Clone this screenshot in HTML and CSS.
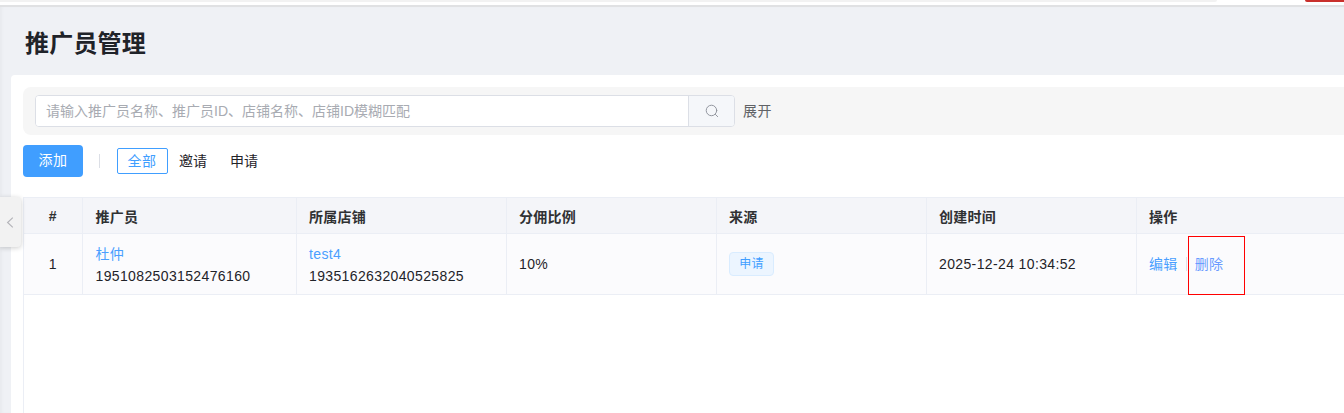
FILE: index.html
```html
<!DOCTYPE html>
<html lang="zh-CN">
<head>
<meta charset="utf-8">
<title>推广员管理</title>
<link rel="stylesheet" href="styles.css">
</head>
<body>
<div class="topbar"><div class="topbar-tab"></div><div class="topbar-alert"></div></div>
<main class="page">
  <h1 class="page-title">推广员管理</h1>
  <section class="card">
    <div class="search-panel">
      <div class="search-box">
        <input class="search-input" type="text" placeholder="请输入推广员名称、推广员ID、店铺名称、店铺ID模糊匹配">
        <button class="search-btn" type="button" aria-label="搜索">
          <svg viewBox="0 0 16 16" width="14" height="14" fill="none" stroke="#8f939b" stroke-width="1.1" stroke-linecap="round"><circle cx="7.4" cy="7.4" r="6"/><path d="M11.9 11.9l2.6 2.6"/></svg>
        </button>
      </div>
      <a class="expand">展开</a>
    </div>
    <div class="toolbar">
      <button class="add-btn" type="button"><span class="add-label">添加</span></button>
      <span class="divider"></span>
      <div class="tabs">
        <span class="tab tab-active">全部</span>
        <span class="tab tab-invite">邀请</span>
        <span class="tab tab-apply">申请</span>
      </div>
    </div>
    <div class="table-area">
      <table class="data-table">
        <thead>
          <tr>
            <th class="col-index">#</th>
            <th class="col-promoter">推广员</th>
            <th class="col-wide">所属店铺</th>
            <th class="col-wide">分佣比例</th>
            <th class="col-wide">来源</th>
            <th class="col-wide">创建时间</th>
            <th class="col-actions">操作</th>
          </tr>
        </thead>
        <tbody>
          <tr>
            <td class="cell-index">1</td>
            <td class="cell-stack cell-promoter"><a class="link">杜仲</a><div>1951082503152476160</div></td>
            <td class="cell-stack"><a class="link">test4</a><div>1935162632040525825</div></td>
            <td>10%</td>
            <td class="cell-tag"><span class="tag">申请</span></td>
            <td>2025-12-24 10:34:52</td>
            <td><a class="link">编辑</a><span class="action-sep"></span><a class="link link-danger">删除</a></td>
          </tr>
        </tbody>
      </table>
    </div>
  </section>
</main>
<button class="collapse" type="button" aria-label="收起">
  <svg viewBox="0 0 10 14" width="8" height="13" fill="none" stroke="#b3b3b8" stroke-width="1.4"><path d="M8.5 1L2 7l6.500 6"/></svg>
</button>
<div class="annotation"></div>
</body>
</html>
```
FILE: styles.css
```css
* { box-sizing: border-box; }
html, body { margin: 0; height: 100%; overflow: hidden; background: #fff; }
body {
  width: 1344px;
  height: 413px;
  position: relative;
  font-family: "Liberation Sans", "Noto Sans CJK SC", sans-serif;
  font-size: 14px;
  color: #1f2329;
  display: flex;
  flex-direction: column;
}
.topbar {
  height: 7px;
  flex: none;
  background: #fff;
  border-bottom: 2px solid #e0e1e3;
  display: flex;
  justify-content: space-between;
}
.topbar-tab { width: 1217px; height: 2px; background: #f2f2f2; border-bottom-right-radius: 6px; }
.topbar-alert { width: 39px; height: 2px; background: #c9302c; border-bottom-left-radius: 3px; }
.page {
  flex: 1;
  min-height: 0;
  background: #eff1f5;
  padding-left: 11px;
  box-shadow: inset 3px 0 3px -1px rgba(0,0,0,.03);
  display: flex;
  flex-direction: column;
}
.page-title {
  margin: 0;
  height: 68px;
  flex: none;
  padding-left: 14px;
  font-size: 24px;
  font-weight: 700;
  line-height: 73px;
  letter-spacing: .2px;
  color: #1f2329;
}
.card {
  flex: 1;
  background: #fff;
  border-top-left-radius: 4px;
  padding: 12px 0 0 12px;
  display: flex;
  flex-direction: column;
  min-height: 0;
}
.search-panel {
  height: 48px;
  flex: none;
  background: #f6f6f6;
  border-radius: 8px 0 0 8px;
  padding: 8px 0 0 12px;
  display: flex;
  align-items: flex-start;
}
.search-box {
  width: 700px;
  height: 32px;
  display: flex;
  border: 1px solid #dcdfe6;
  border-radius: 4px;
  overflow: hidden;
  background: #fff;
}
.search-input {
  flex: 1;
  min-width: 0;
  border: 0;
  outline: 0;
  padding: 0 10px;
  font: inherit;
  background: #fff;
}
.search-input::placeholder { color: #a8abb2; opacity: 1; }
.search-btn {
  width: 46px;
  border: 0;
  border-left: 1px solid #dcdfe6;
  background: #f5f7fa;
  padding: 0;
  display: flex;
  align-items: center;
  justify-content: center;
}
.expand { margin-left: 8px; line-height: 32px; letter-spacing: .6px; color: #606266; }
.toolbar {
  height: 32px;
  flex: none;
  margin-top: 10px;
  display: flex;
  align-items: center;
}
.add-btn {
  width: 60px;
  height: 32px;
  border: 0;
  border-radius: 4px;
  background: #409eff;
  color: #fff;
  font: inherit;
  padding: 0;
  display: flex;
  align-items: center;
  justify-content: center;
}
.add-label { line-height: 30px; height: 30px; margin-top: -2px; letter-spacing: .4px; }
.divider { width: 1px; height: 14px; background: #dcdfe6; margin: 0 17px 0 16px; }
.tabs { display: flex; align-items: center; height: 26px; }
.tab { line-height: 24px; color: #1f2329; }
.tab-active {
  width: 51px;
  height: 26px;
  padding-right: 1px;
  border: 1px solid #409eff;
  border-radius: 2px;
  color: #409eff;
  text-align: center;
  letter-spacing: .4px;
}
.tab-invite { margin-left: 11px; }
.tab-apply { margin-left: 23px; }
.table-area { margin-top: 20px; flex: 1; min-height: 0; border-left: 1px solid #ebeef5; }
.data-table {
  width: 1321px;
  border-collapse: collapse;
  table-layout: fixed;
  letter-spacing: .37px;
}
.data-table th, .data-table td {
  border-right: 1px solid #ebeef5;
  border-bottom: 1px solid #ebeef5;
  text-align: left;
  padding: 0 12px 0 12.5px;
}
.data-table th {
  height: 36px;
  background: #f4f5f9;
  border-top: 1px solid #ebeef5;
  font-weight: 700;
  font-size: 14px;
  letter-spacing: .25px;
  color: #303133;
}
.data-table td {
  height: 61px;
  background: #fbfbfd;
  line-height: 22px;
  color: #1f2329;
}
.data-table td.cell-stack { padding-top: 2px; }
.data-table th.col-promoter, .data-table td.cell-promoter { padding-left: 13px; }
.data-table th:last-child, .data-table td:last-child { border-right: 0; }
.col-index { width: 58px; text-align: center !important; padding: 0 !important; }
.cell-index { text-align: center !important; padding: 0 !important; }
.col-promoter { width: 214px; }
.col-wide { width: 210px; }
.link { color: #4a9fff; }
.link-danger { color: #6a9cff; }
.tag {
  display: inline-block;
  width: 45px;
  height: 24px;
  line-height: 22px;
  text-align: center;
  font-size: 12px;
  color: #409eff;
  background: #ecf5ff;
  border: 1px solid #d9ecff;
  border-radius: 4px;
}
.action-sep {
  display: inline-block;
  width: 1px;
  height: 14px;
  margin: 0 8px;
  background: #dfe2e9;
  vertical-align: -2px;
}
.collapse {
  position: absolute;
  left: 0;
  top: 197px;
  width: 21px;
  height: 50px;
  padding: 0 2px 0 0;
  border: 0;
  border-radius: 0 4px 4px 0;
  background: #f2f2f2;
  box-shadow: 0 1px 5px rgba(0,0,0,.2);
  display: flex;
  align-items: center;
  justify-content: center;
}
.annotation {
  position: absolute;
  left: 1188px;
  top: 236px;
  width: 57px;
  height: 59px;
  border: 1px solid #f00;
}
```
